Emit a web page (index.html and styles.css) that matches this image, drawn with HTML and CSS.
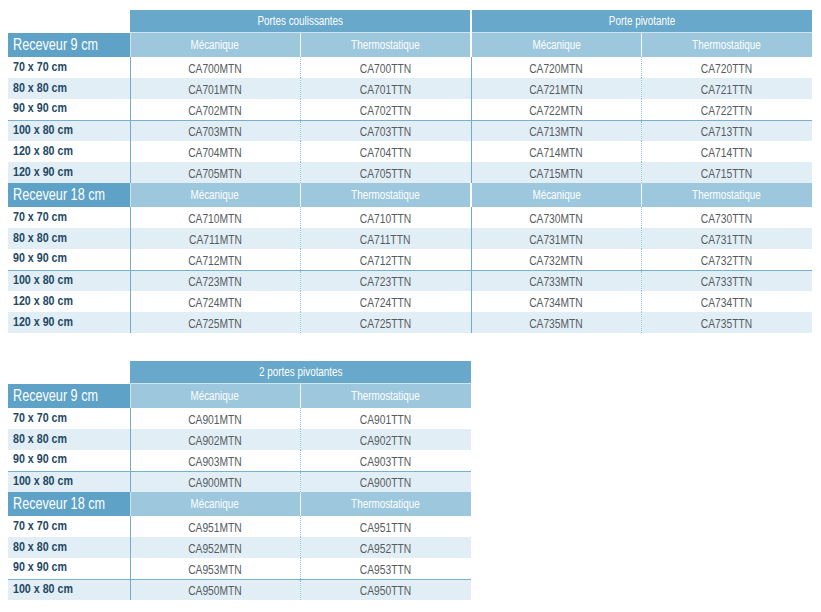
FILE: index.html
```html
<!DOCTYPE html>
<html lang="fr">
<head>
<meta charset="utf-8">
<title>Références</title>
<link rel="stylesheet" href="styles.css">
</head>
<body>
<table class="tbl tbl-wide">
  <colgroup><col class="c-lbl"><col class="c-m"><col class="c-t"><col class="c-m"><col class="c-t"></colgroup>
  <tr class="grp"><td class="blank"></td><th colspan="2"><span class="n">Portes coulissantes</span></th><th colspan="2" class="g2"><span class="n">Porte pivotante</span></th></tr>
  <tr class="sub"><th class="rcv"><span class="n">Receveur 9 cm</span></th><th><span class="n">Mécanique</span></th><th class="t"><span class="n">Thermostatique</span></th><th class="g2"><span class="n">Mécanique</span></th><th class="t"><span class="n">Thermostatique</span></th></tr>
  <tr><td class="lbl"><span class="n">70 x 70 cm</span></td><td><span class="n">CA700MTN</span></td><td class="t"><span class="n">CA700TTN</span></td><td class="g2"><span class="n">CA720MTN</span></td><td class="t"><span class="n">CA720TTN</span></td></tr>
  <tr class="alt"><td class="lbl"><span class="n">80 x 80 cm</span></td><td><span class="n">CA701MTN</span></td><td class="t"><span class="n">CA701TTN</span></td><td class="g2"><span class="n">CA721MTN</span></td><td class="t"><span class="n">CA721TTN</span></td></tr>
  <tr><td class="lbl"><span class="n">90 x 90 cm</span></td><td><span class="n">CA702MTN</span></td><td class="t"><span class="n">CA702TTN</span></td><td class="g2"><span class="n">CA722MTN</span></td><td class="t"><span class="n">CA722TTN</span></td></tr>
  <tr class="alt sep"><td class="lbl"><span class="n">100 x 80 cm</span></td><td><span class="n">CA703MTN</span></td><td class="t"><span class="n">CA703TTN</span></td><td class="g2"><span class="n">CA713MTN</span></td><td class="t"><span class="n">CA713TTN</span></td></tr>
  <tr><td class="lbl"><span class="n">120 x 80 cm</span></td><td><span class="n">CA704MTN</span></td><td class="t"><span class="n">CA704TTN</span></td><td class="g2"><span class="n">CA714MTN</span></td><td class="t"><span class="n">CA714TTN</span></td></tr>
  <tr class="alt"><td class="lbl"><span class="n">120 x 90 cm</span></td><td><span class="n">CA705MTN</span></td><td class="t"><span class="n">CA705TTN</span></td><td class="g2"><span class="n">CA715MTN</span></td><td class="t"><span class="n">CA715TTN</span></td></tr>
  <tr class="sub"><th class="rcv"><span class="n">Receveur 18 cm</span></th><th><span class="n">Mécanique</span></th><th class="t"><span class="n">Thermostatique</span></th><th class="g2"><span class="n">Mécanique</span></th><th class="t"><span class="n">Thermostatique</span></th></tr>
  <tr><td class="lbl"><span class="n">70 x 70 cm</span></td><td><span class="n">CA710MTN</span></td><td class="t"><span class="n">CA710TTN</span></td><td class="g2"><span class="n">CA730MTN</span></td><td class="t"><span class="n">CA730TTN</span></td></tr>
  <tr class="alt"><td class="lbl"><span class="n">80 x 80 cm</span></td><td><span class="n">CA711MTN</span></td><td class="t"><span class="n">CA711TTN</span></td><td class="g2"><span class="n">CA731MTN</span></td><td class="t"><span class="n">CA731TTN</span></td></tr>
  <tr><td class="lbl"><span class="n">90 x 90 cm</span></td><td><span class="n">CA712MTN</span></td><td class="t"><span class="n">CA712TTN</span></td><td class="g2"><span class="n">CA732MTN</span></td><td class="t"><span class="n">CA732TTN</span></td></tr>
  <tr class="alt sep"><td class="lbl"><span class="n">100 x 80 cm</span></td><td><span class="n">CA723MTN</span></td><td class="t"><span class="n">CA723TTN</span></td><td class="g2"><span class="n">CA733MTN</span></td><td class="t"><span class="n">CA733TTN</span></td></tr>
  <tr><td class="lbl"><span class="n">120 x 80 cm</span></td><td><span class="n">CA724MTN</span></td><td class="t"><span class="n">CA724TTN</span></td><td class="g2"><span class="n">CA734MTN</span></td><td class="t"><span class="n">CA734TTN</span></td></tr>
  <tr class="alt"><td class="lbl"><span class="n">120 x 90 cm</span></td><td><span class="n">CA725MTN</span></td><td class="t"><span class="n">CA725TTN</span></td><td class="g2"><span class="n">CA735MTN</span></td><td class="t"><span class="n">CA735TTN</span></td></tr>
</table>

<table class="tbl tbl-narrow">
  <colgroup><col class="c-lbl"><col class="c-m"><col class="c-t"></colgroup>
  <tr class="grp"><td class="blank"></td><th colspan="2"><span class="n">2 portes pivotantes</span></th></tr>
  <tr class="sub"><th class="rcv"><span class="n">Receveur 9 cm</span></th><th><span class="n">Mécanique</span></th><th class="t"><span class="n">Thermostatique</span></th></tr>
  <tr><td class="lbl"><span class="n">70 x 70 cm</span></td><td><span class="n">CA901MTN</span></td><td class="t"><span class="n">CA901TTN</span></td></tr>
  <tr class="alt"><td class="lbl"><span class="n">80 x 80 cm</span></td><td><span class="n">CA902MTN</span></td><td class="t"><span class="n">CA902TTN</span></td></tr>
  <tr><td class="lbl"><span class="n">90 x 90 cm</span></td><td><span class="n">CA903MTN</span></td><td class="t"><span class="n">CA903TTN</span></td></tr>
  <tr class="alt sep"><td class="lbl"><span class="n">100 x 80 cm</span></td><td><span class="n">CA900MTN</span></td><td class="t"><span class="n">CA900TTN</span></td></tr>
  <tr class="sub"><th class="rcv"><span class="n">Receveur 18 cm</span></th><th><span class="n">Mécanique</span></th><th class="t"><span class="n">Thermostatique</span></th></tr>
  <tr><td class="lbl"><span class="n">70 x 70 cm</span></td><td><span class="n">CA951MTN</span></td><td class="t"><span class="n">CA951TTN</span></td></tr>
  <tr class="alt"><td class="lbl"><span class="n">80 x 80 cm</span></td><td><span class="n">CA952MTN</span></td><td class="t"><span class="n">CA952TTN</span></td></tr>
  <tr><td class="lbl"><span class="n">90 x 90 cm</span></td><td><span class="n">CA953MTN</span></td><td class="t"><span class="n">CA953TTN</span></td></tr>
  <tr class="alt sep"><td class="lbl"><span class="n">100 x 80 cm</span></td><td><span class="n">CA950MTN</span></td><td class="t"><span class="n">CA950TTN</span></td></tr>
</table>
</body>
</html>
```

FILE: styles.css
```css
html, body {
  margin: 0;
  background: #ffffff;
}
body {
  padding: 10px 0 0 8px;
  font-family: "Liberation Sans", Arial, sans-serif;
  font-size: 13px;
  color: #555b60;
}
.tbl {
  border-collapse: collapse;
  table-layout: fixed;
  border-spacing: 0;
}
.tbl-wide { width: 803px; }
.tbl-narrow { width: 463px; margin-top: 28px; }
.c-lbl { width: 122px; }
.c-m { width: 170px; }
.c-t { width: 171px; }

/* condensed rendering of the sans face */
.n {
  display: inline-block;
  transform: scaleX(0.79);
  transform-origin: 50% 50%;
}
.lbl .n, .rcv .n { transform-origin: 0 50%; }

.tbl th, .tbl td {
  padding: 0;
  text-align: center;
  white-space: nowrap;
  overflow: hidden;
}
.tbl td {
  height: 21px;
  padding-top: 2px;
  box-sizing: border-box;
  vertical-align: middle;
  line-height: 15px;
}
.tbl tr.alt td { background: #e2eef6; }
.tbl td.t { border-left: 1px dotted #8fc0da; }
.tbl td.g2 { border-left: 1px solid #72abcb; }
.tbl tr.sep td { border-top: 1px solid #79b0cf; }

.tbl td.lbl {
  text-align: left;
  padding: 0 0 3px 5px;
  font-weight: bold;
  font-size: 13.5px;
  color: #1e4863;
  border-right: 1px solid #72abcb;
}

.grp th {
  height: 22px;
  background: #68a8ca;
  color: #ffffff;
  font-weight: normal;
  font-size: 12.5px;
  border-bottom: 1px solid #cfe4ef;
}
.grp th.g2 { border-left: 2px solid #ffffff; }
.grp td.blank { background: #ffffff; height: 22px; padding: 0; }

.sub th {
  height: 23px;
  background: #9dc7dd;
  color: #ffffff;
  font-weight: normal;
  font-size: 12.5px;
  padding-top: 1px;
  line-height: 15px;
}
.sub th.t { border-left: 1px dotted #e4f0f6; }
.sub th.g2 { border-left: 2px solid #ffffff; }
.sub th.rcv {
  background: #5ea2c7;
  text-align: left;
  padding: 0 0 1px 5px;
  font-size: 16px;
  font-weight: normal;
  border-right: 1px solid #cfe4ef;
}
```
